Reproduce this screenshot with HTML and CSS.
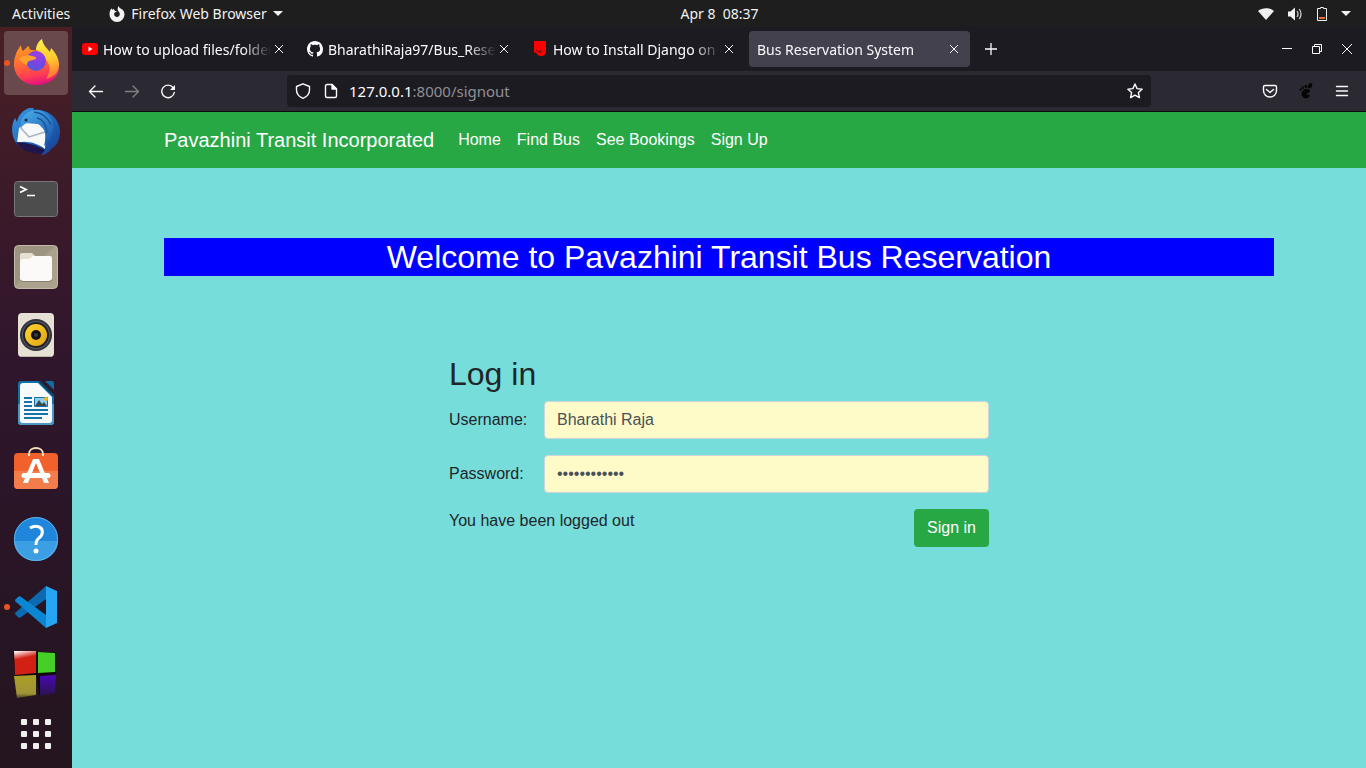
FILE: index.html
```html
<!DOCTYPE html>
<html lang="en">
<head>
<meta charset="utf-8">
<meta name="viewport" content="width=device-width, initial-scale=1">
<title>Bus Reservation System</title>
<link rel="stylesheet" href="styles.css">
</head>
<body class="desktop">
<header class="topbar">
  <div class="topbar-left">
    <button class="topbar-btn activities" type="button">Activities</button>
    <button class="topbar-btn app-menu" type="button">
      <svg width="16" height="16" viewBox="0 0 16 16" aria-hidden="true"><path d="M8 16A7.500 7.500 0 0 1 .5 8.400C.4 6 1.200 3.800 2.500 2.200l.6 1.600L5 2.700c-.2 1.100.3 1.800 1.600 2.200L8 5.600 5.800 6.600C4.900 7.500 4.900 9 5.800 10c1.200 1.200 3.200 1.200 4.300 0 1.200-1.500.8-3.200-.5-4.500C8.300 4.100 8.300 1.500 9.800 0c0 1.700 1.500 2.300 2.800 3.100 1.800 1.300 2.900 3.200 2.900 5.300A7.500 7.500 0 0 1 8 16z" fill="#f2f2f2"/></svg>
      <span>Firefox Web Browser</span>
      <svg width="10" height="6" viewBox="0 0 10 6" aria-hidden="true"><path d="M0 0h10L5 5z" fill="#f2f2f2"/></svg>
    </button>
  </div>
  <time class="clock" datetime="08:37">Apr 8&nbsp; 08:37</time>
  <div class="topbar-right">
    <svg width="16" height="14" viewBox="0 0 16 14" role="img" aria-label="Wi-Fi"><path d="M0 4C4 .2 12 .2 16 4L8 13z" fill="#f2f2f2"/></svg>
    <svg width="16" height="14" viewBox="0 0 16 14" role="img" aria-label="Volume"><path d="M1 4.500h2.500L8 .5v13l-4.500-4H1z" fill="#f2f2f2"/><path d="M10 4q2 3 0 6M12.300 2q3.400 5 0 10" fill="none" stroke="#ccc" stroke-width="1.300"/></svg>
    <svg width="12" height="16" viewBox="0 0 12 16" role="img" aria-label="Battery"><path d="M4.500 1.500h3v1h3v12h-9v-12h3z" fill="none" stroke="#f2f2f2"/><path d="M3 11h6v2H3z" fill="#f06a2e"/></svg>
    <svg width="10" height="6" viewBox="0 0 10 6" aria-hidden="true"><path d="M0 0h10L5 5z" fill="#f2f2f2"/></svg>
  </div>
</header>
<div class="workspace">
  <nav class="dock" aria-label="Dock">
    <button class="dock-item active running" type="button" aria-label="Firefox">
      <svg width="48" height="48" viewBox="0 0 48 48">
        <defs>
          <linearGradient id="fx1" x1=".3" y1="0" x2=".5" y2="1"><stop offset="0" stop-color="#ff9a1f"/><stop offset=".45" stop-color="#ff6a35"/><stop offset=".75" stop-color="#ff3f52"/><stop offset="1" stop-color="#e0107f"/></linearGradient>
          <linearGradient id="fx2" x1=".4" y1="0" x2=".5" y2="1"><stop offset="0" stop-color="#fff04a"/><stop offset=".5" stop-color="#ffc92f"/><stop offset="1" stop-color="#ff7038"/></linearGradient>
          <radialGradient id="fx3" cx=".6" cy=".2" r=".9"><stop offset="0" stop-color="#a23be6"/><stop offset=".6" stop-color="#6f48e0"/><stop offset="1" stop-color="#4b5fd6"/></radialGradient>
        </defs>
        <path d="M3 18C4 13 7 9 9 6c0 3 1 5 2 6 3-3 5-5 6-5 0 3 1 4 3 4l18 2c6 5 9 9 9 15 0 11-10 18-23 18C11 46 2 36 2 26c0-3 0-5 1-8z" fill="url(#fx1)"/>
        <path d="M24 11C24 6 27 2 30 0c1 6 4 8 8 13l1-4c6 6 8 12 8 17-1 9-6 12-13 14 4-6 5-12 1-18-3-6-7-9-11-11z" fill="url(#fx2)"/>
        <circle cx="24" cy="22" r="10" fill="url(#fx3)"/>
        <path d="M7 19q7-4 13-2 5 1 4 3-3 1-7 2-2 1-2 4c-2 0-6-3-8-7z" fill="#ffa12e"/>
      </svg>
    </button>
    <button class="dock-item" type="button" aria-label="Thunderbird">
      <svg width="48" height="48" viewBox="0 0 48 48">
        <defs>
          <linearGradient id="tb" x1="0" y1="0" x2="1" y2="1"><stop offset="0" stop-color="#3a9be4"/><stop offset=".55" stop-color="#1d66ba"/><stop offset="1" stop-color="#1a3a8c"/></linearGradient>
          <linearGradient id="tb2" x1="0" y1="0" x2=".6" y2="1"><stop offset="0" stop-color="#4cb0ee"/><stop offset="1" stop-color="#1c5cae"/></linearGradient>
        </defs>
        <path d="M4 36C-1 28-1 18 3 11l2 4c1-7 7-13 13-14h4l-1 2c14-2 27 8 27 22 0 8-4 14-8 17l1-3c-3 6-8 9-12 9l2-4C21 47 10 44 4 36z" fill="url(#tb)"/>
        <path d="M5 36L7 21l6-5 14 1 7 8-1 17c-8-6-19-9-28-6z" fill="#f7f8fa"/>
        <path d="M8 20l9 10 16-5" fill="none" stroke="#a9b0bd" stroke-width="1.500"/>
        <path d="M4 35c10 0 20 3 29 8l-3 4C18 47 8 43 4 35z" fill="#20164c"/>
        <path d="M9 21C7 12 14 4 22 3c10 0 18 6 19 14 1 9-3 17-9 22 2-7 2-13-1-18-4-5-9-6-14-5-4 0-6 2-8 5z" fill="url(#tb2)"/>
        <path d="M22 5q12 1 17 13M25 11q9 2 10 15" stroke="#185498" stroke-width="1.500" fill="none"/>
        <circle cx="14" cy="13" r="1.500" fill="#112b49"/>
      </svg>
    </button>
    <button class="dock-item" type="button" aria-label="Terminal">
      <svg width="48" height="48" viewBox="0 0 48 48">
        <rect x="2.500" y="6.500" width="43" height="35" rx="3" fill="#4d4d4d" stroke="#777"/>
        <path d="M8 11.500l6 3-6 3" fill="none" stroke="#fff" stroke-width="1.800"/><path d="M15 20.500h8" stroke="#fff" stroke-width="1.500"/>
      </svg>
    </button>
    <button class="dock-item" type="button" aria-label="Files">
      <svg width="48" height="48" viewBox="0 0 48 48">
        <defs><linearGradient id="fl" x1="0" y1="0" x2="1" y2="1"><stop offset=".45" stop-color="#9c9380"/><stop offset=".5" stop-color="#aba28e"/></linearGradient></defs>
        <rect x="2.500" y="2.500" width="43" height="43" rx="4" fill="url(#fl)" stroke="#c3bbaa"/>
        <path d="M8 20v-8q0-2 2-2h10l3 3v7z" fill="#e6e0d2"/>
        <path d="M8 19q0-3 3-3h6l4-3h17q2 0 2 2v20q0 3-3 3H11q-3 0-3-3z" fill="#fbfaf8"/>
        <path d="M9 37.500q1 1 2 1h26q2 0 3-2" stroke="#857d6d" fill="none"/>
      </svg>
    </button>
    <button class="dock-item" type="button" aria-label="Rhythmbox">
      <svg width="48" height="48" viewBox="0 0 48 48">
        <defs><linearGradient id="rb" x1="0" y1="0" x2="1" y2="1"><stop offset="0" stop-color="#ffd52b"/><stop offset="1" stop-color="#e0a31a"/></linearGradient></defs>
        <rect x="6" y="2" width="36" height="44" rx="4" fill="#e6e0d5"/><path d="M8 45.500h32" stroke="#bcb5a7"/>
        <circle cx="24" cy="24" r="16" fill="#32333c"/><circle cx="24" cy="24" r="14" fill="#595a62"/><circle cx="24" cy="24" r="13" fill="#202128"/>
        <circle cx="24" cy="24" r="11" fill="url(#rb)"/><circle cx="24" cy="24" r="5" fill="#111"/><circle cx="24" cy="24" r="2" fill="#3c3c3c"/>
      </svg>
    </button>
    <button class="dock-item" type="button" aria-label="LibreOffice Writer">
      <svg width="48" height="48" viewBox="0 0 48 48">
        <path d="M9 2h18l15 14v27q0 3-3 3H9q-3 0-3-3V5q0-3 3-3z" fill="#0f70a6"/>
        <path d="M6 25h36v18q0 3-3 3H9q-3 0-3-3z" fill="#4c98c2"/>
        <path d="M11 4h15l14 14v23q0 3-3 3H11q-3 0-3-3V7q0-3 3-3z" fill="#f8f9fb"/>
        <path d="M33 2h7q2 0 2 2v7z" fill="#0f6da4"/><path d="M27 2l15 15" stroke="#0b4163" stroke-width="2"/>
        <path d="M12 19h8M12 23h8M12 27h8M12 31h24M12 35h24M12 39h18" stroke="#1474a8" stroke-width="2"/>
        <path d="M22.500 18.500h13v9h-13z" fill="#8fcdf0" stroke="#1474a8"/><path d="M23 27l4-6 3 4 2-2 3 4z" fill="#3a4852"/><circle cx="34" cy="20" r="2" fill="#f6b51e"/>
      </svg>
    </button>
    <button class="dock-item" type="button" aria-label="Ubuntu Software">
      <svg width="48" height="48" viewBox="0 0 48 48">
        <rect x="2" y="6" width="44" height="36" rx="4" fill="#f2602b"/><path d="M2 24h44v14q0 4-4 4H6q-4 0-4-4z" fill="#f37c4b"/>
        <path d="M17 9V7c0-8 14-8 14 0v2" fill="none" stroke="#f4dfba" stroke-width="2"/>
        <path d="M11 36l10-24h6l10 24h-5l-8-20-8 20z" fill="#fff"/><path d="M12 28.500h24" stroke="#fff" stroke-width="5" stroke-linecap="round"/>
      </svg>
    </button>
    <button class="dock-item" type="button" aria-label="Help">
      <svg width="48" height="48" viewBox="0 0 48 48">
        <circle cx="24" cy="24" r="22" fill="#1f86dc"/><path d="M2 26h44a22 20 0 0 1-44 0z" fill="#3d9fe3"/><circle cx="24" cy="24" r="21.500" fill="none" stroke="#5eb1ea"/>
        <path d="M18 13q5-3 9-1c5 2 4 8 0 11-3 2-3 4-3 7" fill="none" stroke="#fff" stroke-width="3"/><circle cx="24" cy="36" r="2.500" fill="#fff"/>
      </svg>
    </button>
    <button class="dock-item running" type="button" aria-label="Visual Studio Code">
      <svg width="48" height="48" viewBox="0 0 48 48">
        <path d="M34 3v13L8.500 34.500q-1 .5-2 0l-3-3q-1-1 0-2z" fill="#0c6bb0"/>
        <path d="M34 45V32L8.500 13.500q-1-.5-2 0l-3 3q-1 1 0 2z" fill="#0b86d3"/>
        <path d="M34 3l11 5v32l-11 5z" fill="#28a5f2"/>
      </svg>
    </button>
    <button class="dock-item" type="button" aria-label="Code Blocks">
      <svg width="48" height="48" viewBox="0 0 48 48">
        <defs><linearGradient id="cb1" x1=".1" y1="0" x2=".3" y2="1"><stop offset="0" stop-color="#fff"/><stop offset=".35" stop-color="#d32014"/></linearGradient><linearGradient id="cb2" x1="0" y1="0" x2="0" y2="1"><stop offset="0" stop-color="#a9a024"/><stop offset=".8" stop-color="#a09338"/><stop offset="1" stop-color="#4d4218"/></linearGradient><linearGradient id="cb3" x1="0" y1="0" x2="0" y2="1"><stop offset="0" stop-color="#4b08b8"/><stop offset="1" stop-color="#29134c"/></linearGradient></defs>
        <path d="M1 1h43v22l-14 2v18l-3 1-2-18H3z" fill="#0e090b"/>
        <path d="M2 0h22v22L3 24z" fill="url(#cb1)"/><path d="M26 1l17 1v19l-17 1z" fill="#45cf27"/>
        <path d="M2 25l22-1v20L5 47z" fill="url(#cb2)"/><path d="M28 25l16-1-1 18-15 3z" fill="url(#cb3)"/>
      </svg>
    </button>
    <button class="dock-apps" type="button" aria-label="Show Applications">
      <svg width="30" height="30" viewBox="0 0 30 30" fill="#f0efee"><rect width="6" height="6" rx="1"/><rect x="12" width="6" height="6" rx="1"/><rect x="24" width="6" height="6" rx="1"/><rect y="12" width="6" height="6" rx="1"/><rect x="12" y="12" width="6" height="6" rx="1"/><rect x="24" y="12" width="6" height="6" rx="1"/><rect y="24" width="6" height="6" rx="1"/><rect x="12" y="24" width="6" height="6" rx="1"/><rect x="24" y="24" width="6" height="6" rx="1"/></svg>
    </button>
  </nav>
  <div class="browser">
    <div class="tabstrip">
      <div class="tab">
        <svg width="16" height="16" viewBox="0 0 16 16" aria-hidden="true"><rect y="2" width="16" height="12" rx="3" fill="#f00"/><path d="M6.500 5.500L10.500 8l-4 2.500z" fill="#fff"/></svg>
        <span class="tab-title">How to upload files/folders</span>
        <button class="tab-close" type="button" aria-label="Close tab"><svg width="10" height="10" viewBox="0 0 10 10"><path d="M1 1l8 8M9 1L1 9"/></svg></button>
      </div>
      <div class="tab">
        <svg width="16" height="16" viewBox="0 0 16 16" aria-hidden="true"><path fill="#fff" d="M8 0C3.580 0 0 3.580 0 8c0 3.540 2.290 6.530 5.470 7.590.4.070.55-.17.55-.38 0-.19-.01-.82-.01-1.490-2.010.37-2.530-.49-2.690-.94-.09-.23-.48-.94-.82-1.130-.28-.15-.68-.52-.01-.53.63-.01 1.080.58 1.230.82.72 1.210 1.870.87 2.330.66.070-.52.280-.87.510-1.070-1.780-.2-3.640-.89-3.640-3.950 0-.87.310-1.590.820-2.150-.08-.2-.36-1.020.080-2.120 0 0 .67-.21 2.200.820.640-.18 1.320-.27 2-.27s1.360.09 2 .27c1.530-1.040 2.200-.82 2.200-.82.440 1.100.160 1.920.080 2.120.510.560.820 1.270.820 2.150 0 3.070-1.870 3.750-3.650 3.950.290.250.540.730.540 1.480 0 1.070-.01 1.930-.01 2.200 0 .210.150.460.550.380A8.010 8.010 0 0 0 16 8c0-4.420-3.580-8-8-8z"/></svg>
        <span class="tab-title">BharathiRaja97/Bus_Reserv</span>
        <button class="tab-close" type="button" aria-label="Close tab"><svg width="10" height="10" viewBox="0 0 10 10"><path d="M1 1l8 8M9 1L1 9"/></svg></button>
      </div>
      <div class="tab">
        <svg width="16" height="16" viewBox="0 0 16 16" aria-hidden="true"><path d="M2 0h12v10q0 5-5 5-4 0-5-4L2 12z" fill="#f00"/><path d="M5 11q3-1 4-1l-1 2M4 9l2 2" stroke="#55090d" fill="none"/></svg>
        <span class="tab-title">How to Install Django on U</span>
        <button class="tab-close" type="button" aria-label="Close tab"><svg width="10" height="10" viewBox="0 0 10 10"><path d="M1 1l8 8M9 1L1 9"/></svg></button>
      </div>
      <div class="tab selected">
        <span class="tab-title">Bus Reservation System</span>
        <button class="tab-close" type="button" aria-label="Close tab"><svg width="10" height="10" viewBox="0 0 10 10"><path d="M1 1l8 8M9 1L1 9"/></svg></button>
      </div>
      <button class="new-tab" type="button" aria-label="New tab"><svg width="12" height="12" viewBox="0 0 12 12"><path d="M6 0v12M0 6h12" stroke="#fbfbfe" stroke-width="1.300"/></svg></button>
      <div class="window-controls">
        <button type="button" aria-label="Minimize"><svg width="10" height="10" viewBox="0 0 10 10"><path d="M0 4.500h10"/></svg></button>
        <button type="button" aria-label="Restore"><svg width="10" height="10" viewBox="0 0 10 10"><path d="M.5 2.500h7v7h-7zM2.500 2.500v-2h7v7h-2"/></svg></button>
        <button type="button" aria-label="Close"><svg width="10" height="10" viewBox="0 0 10 10"><path d="M0 0l10 10M10 0L0 10"/></svg></button>
      </div>
    </div>
    <div class="toolbar">
      <button class="tool" type="button" aria-label="Back"><svg width="16" height="16" viewBox="0 0 16 16"><path d="M14.500 8.500H1.500M7 3L1.500 8.500 7 14"/></svg></button>
      <button class="tool dim" type="button" aria-label="Forward"><svg width="16" height="16" viewBox="0 0 16 16"><path d="M1.500 8.500h13M9 3l5.500 5.500L9 14"/></svg></button>
      <button class="tool" type="button" aria-label="Reload"><svg width="16" height="16" viewBox="0 0 16 16"><path d="M13 4.500A6.300 6.300 0 1 0 14.300 9.500"/><path d="M15 2v5h-5z" fill="#fbfbfe" stroke="none"/></svg></button>
      <div class="urlbar">
        <svg width="16" height="16" viewBox="0 0 16 16" aria-hidden="true"><path d="M8 .8L14.500 3.500v3.500c0 4-2.500 6.700-6.500 8.300C4 13.700 1.500 11 1.500 7V3.500z"/></svg>
        <svg width="16" height="16" viewBox="0 0 16 16" aria-hidden="true"><path d="M4 1.500h5l4.500 4.500v7q0 1.500-1.500 1.500H4q-1.500 0-1.500-1.500V3q0-1.500 1.500-1.500z"/><path d="M9 1.500V6h4.500z" fill="#fbfbfe"/></svg>
        <div class="url" role="textbox" aria-label="Address" tabindex="0"><span class="host">127.0.0.1</span>:8000/signout</div>
        <button class="star" type="button" aria-label="Bookmark"><svg width="16" height="16" viewBox="0 0 16 16"><path d="M8 1l2.100 4.600 5 .6-3.700 3.400 1 5L8 12.100l-4.400 2.500 1-5L.9 6.200l5-.6z"/></svg></button>
      </div>
      <button class="tool" type="button" aria-label="Pocket"><svg width="16" height="16" viewBox="0 0 16 16"><path d="M3 2.500h10q1.500 0 1.500 1.500V7.500C14.500 11.500 11.500 14 8 14S1.500 11.500 1.500 7.500V4Q1.500 2.500 3 2.500z"/><path d="M4.500 6.500L8 9.500l3.500-3"/></svg></button>
      <button class="tool" type="button" aria-label="GNOME extension"><svg width="16" height="16" viewBox="0 0 16 16" fill="#050505"><path d="M5 7.500c3-2.500 7-1.500 7 .5s-3 1.500-3 3 1 1 1.500.5l1.500 1C11 15.500 7 16.500 5 14c-2-2-2-5 0-6.500z"/><ellipse cx="12" cy="2.800" rx="1.900" ry="2.900" transform="rotate(30 12 2.800)"/><ellipse cx="7.800" cy="3.500" rx="1.200" ry="1.800"/><ellipse cx="4.800" cy="4.700" rx="1" ry="1.600"/><ellipse cx="2.600" cy="6.500" rx="1" ry="1.300"/></svg></button>
      <button class="tool" type="button" aria-label="Menu"><svg width="16" height="16" viewBox="0 0 16 16"><path d="M2.500 3.500h11M2.500 8h11M2.500 12.500h11"/></svg></button>
    </div>
    <div class="page">
      <nav class="navbar">
        <div class="container navbar-inner">
          <a class="brand" href="#">Pavazhini Transit Incorporated</a>
          <a class="nav-link" href="#">Home</a>
          <a class="nav-link" href="#">Find Bus</a>
          <a class="nav-link" href="#">See Bookings</a>
          <a class="nav-link" href="#">Sign Up</a>
        </div>
      </nav>
      <main class="container">
        <h1 class="welcome">Welcome to Pavazhini Transit Bus Reservation</h1>
        <form class="login">
          <h2 class="login-title">Log in</h2>
          <div class="form-row">
            <label for="username">Username:</label>
            <input class="field" id="username" type="text" value="Bharathi Raja">
          </div>
          <div class="form-row">
            <label for="password">Password:</label>
            <input class="field" id="password" type="password" value="secretsecret">
          </div>
          <div class="form-footer">
            <p class="message">You have been logged out</p>
            <button class="submit" type="button">Sign in</button>
          </div>
        </form>
      </main>
    </div>
  </div>
</div>
</body>
</html>
```
FILE: styles.css
```css
* {
  box-sizing: border-box;
}

.desktop {
  margin: 0;
  min-height: 100vh;
  display: flex;
  flex-direction: column;
  font-family: "Noto Sans", "Open Sans", sans-serif;
  font-size: 14px;
  color: #f2f2f2;
}

button {
  margin: 0;
  padding: 0;
  border: 0;
  background: none;
  color: inherit;
  font: inherit;
}

svg {
  display: block;
  flex: none;
}

/* System bar */
.topbar {
  display: flex;
  align-items: center;
  height: 27px;
  background: #1e1e1e;
}

.topbar-left {
  flex: 1 0 88px;
  display: flex;
  align-items: center;
  gap: 39px;
  padding-left: 12px;
}

.topbar-right {
  flex: 1 0 0;
  display: flex;
  align-items: center;
  justify-content: flex-end;
  gap: 13px;
  padding-right: 15px;
}

.app-menu {
  display: flex;
  align-items: center;
  gap: 6px;
}

/* Dock */
.workspace {
  flex: 1;
  display: flex;
}

.dock {
  flex: none;
  width: 72px;
  display: flex;
  flex-direction: column;
  align-items: center;
  gap: 4px;
  padding: 4px 0;
  background: linear-gradient(#4a1f24 0, #3c1a29 22%, #30162c 45%, #2a1527 65%, #24151f 100%);
}

.dock-item {
  position: relative;
  width: 64px;
  height: 64px;
  display: grid;
  place-items: center;
  border-radius: 4px;
}

.dock-item.active {
  background: #6a494d;
}

.dock-item.running::before {
  content: "";
  position: absolute;
  left: 0;
  top: 29px;
  width: 6px;
  height: 6px;
  border-radius: 50%;
  background: #e95420;
}

.dock-apps {
  padding: 8px;
}

/* Browser window */
.browser {
  flex: 1;
  min-width: 0;
  display: flex;
  flex-direction: column;
}

.tabstrip {
  display: flex;
  align-items: center;
  gap: 4px;
  height: 44px;
  padding-left: 2px;
  background: #1c1b22;
  color: #fbfbfe;
}

.tab {
  flex: 0 1 221px;
  min-width: 0;
  height: 36px;
  display: flex;
  align-items: center;
  padding: 0 8px;
  gap: 5px;
  border-radius: 4px;
}

.tab.selected {
  background: #42414d;
}

.tab-title {
  flex: 1;
  min-width: 0;
  overflow: hidden;
  white-space: nowrap;
  margin-right: -5px;
  -webkit-mask-image: linear-gradient(to left, transparent, #000 28px);
  mask-image: linear-gradient(to left, transparent, #000 28px);
}

.tab-close {
  width: 16px;
  height: 16px;
  display: grid;
  place-items: center;
}

.tab-close path,
.window-controls path {
  fill: none;
  stroke: #fbfbfe;
  stroke-width: 1;
}

.new-tab {
  width: 34px;
  height: 36px;
  display: grid;
  place-items: center;
}

.window-controls {
  display: flex;
  gap: 20px;
  margin-left: auto;
  padding-right: 14px;
}

.toolbar {
  display: flex;
  align-items: center;
  height: 41px;
  padding: 0 6px;
  background: #2b2a33;
  border-bottom: 1px solid #0c0c0d;
}

.tool {
  width: 36px;
  height: 32px;
  display: grid;
  place-items: center;
}

.tool.dim {
  opacity: 0.4;
}

.tool svg:not([fill]),
.urlbar svg {
  fill: none;
  stroke: #fbfbfe;
  stroke-width: 1.4px;
  stroke-linejoin: round;
  stroke-linecap: round;
}

.urlbar {
  flex: 1;
  min-width: 0;
  height: 32px;
  margin: 0 101px;
  padding: 0 8px;
  display: flex;
  align-items: center;
  gap: 12px;
  border-radius: 4px;
  background: #1c1b22;
}

.url {
  flex: 1;
  white-space: nowrap;
  overflow: hidden;
  font-size: 15px;
  margin-left: -2px;
  color: #8f8f94;
}

.host {
  color: #fbfbfe;
}

/* Web page */
.page {
  flex: 1;
  background: #76dddb;
  color: #212529;
  font-family: "Liberation Sans", Arial, sans-serif;
  font-size: 16px;
  line-height: 24px;
}

.container {
  width: 100%;
  max-width: 1140px;
  margin: 0 auto;
  padding: 0 15px;
}

.navbar {
  background: #28a745;
  padding: 8px 0;
}

.navbar-inner {
  display: flex;
  align-items: center;
}

.brand {
  margin-right: 16px;
  font-size: 20px;
  line-height: 30px;
  color: #fff;
  text-decoration: none;
}

.nav-link {
  padding: 8px;
  color: #fff;
  text-decoration: none;
}

.welcome {
  margin: 70px 0 79px;
  background: #00f;
  color: #fff;
  font-size: 32px;
  font-weight: 400;
  line-height: 38px;
  text-align: center;
}

.login {
  width: 50%;
  padding: 0 15px;
  margin: 0 auto;
  box-sizing: content-box;
  max-width: 540px;
}

.login-title {
  margin: 0 0 8px;
  font-size: 32px;
  font-weight: 400;
  line-height: 38px;
}

.form-row {
  display: flex;
  align-items: center;
  margin-bottom: 16px;
}

.form-row label {
  flex: none;
  width: 95px;
}

.field {
  flex: 1;
  min-width: 0;
  height: 38px;
  padding: 6px 12px;
  border: 1px solid #ced4da;
  border-radius: 4px;
  background: #fffbc8;
  color: #495057;
  font: inherit;
}

.form-footer {
  display: flex;
  justify-content: space-between;
  align-items: flex-start;
}

.message {
  margin: 0;
}

.submit {
  padding: 7px 13px;
  border-radius: 4px;
  background: #28a745;
  color: #fff;
}
```
